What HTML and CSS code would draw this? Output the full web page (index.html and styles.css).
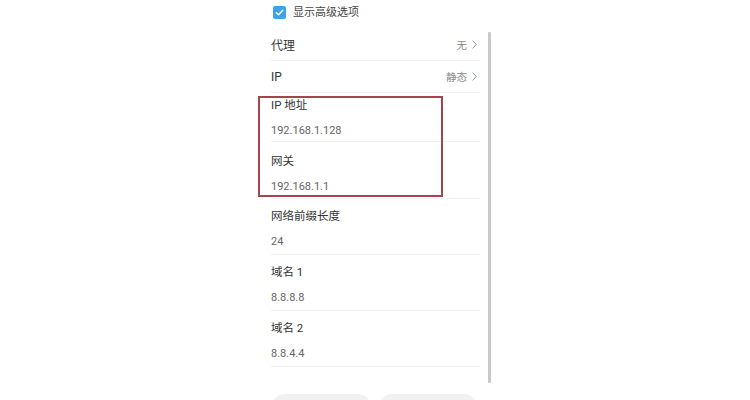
FILE: index.html
```html
<!DOCTYPE html>
<html lang="zh-CN">
<head>
<meta charset="utf-8">
<title>高级选项</title>
<link rel="stylesheet" href="styles.css">
</head>
<body>
<div class="screen">
  <div class="column">
    <div class="advanced">
      <span class="checkbox">
        <svg width="9" height="9" viewBox="0 0 10 10"><path d="M1.5 5.2 L4 7.5 L8.6 2.6" fill="none" stroke="#fff" stroke-width="1.6" stroke-linecap="round" stroke-linejoin="round"/></svg>
      </span>
      <span class="advanced-label">显示高级选项</span>
    </div>
    <div class="list">
      <div class="row row-first">
        <span class="row-title">代理</span>
        <span class="row-value">无<svg class="chev" width="5" height="9" viewBox="0 0 5 9"><path d="M0.6 0.6 L4.3 4.5 L0.6 8.4" fill="none" stroke="#8a8a8a" stroke-width="0.9"/></svg></span>
      </div>
      <div class="row">
        <span class="row-title">IP</span>
        <span class="row-value">静态<svg class="chev" width="5" height="9" viewBox="0 0 5 9"><path d="M0.6 0.6 L4.3 4.5 L0.6 8.4" fill="none" stroke="#8a8a8a" stroke-width="0.9"/></svg></span>
      </div>
      <div class="highlight">
        <div class="item item-tight">
          <div class="item-label">IP 地址</div>
          <div class="item-value">192.168.1.128</div>
        </div>
        <div class="item item-loose">
          <div class="item-label">网关</div>
          <div class="item-value">192.168.1.1</div>
        </div>
      </div>
      <div class="item">
        <div class="item-label">网络前缀长度</div>
        <div class="item-value">24</div>
      </div>
      <div class="item">
        <div class="item-label">域名 1</div>
        <div class="item-value">8.8.8.8</div>
      </div>
      <div class="item">
        <div class="item-label">域名 2</div>
        <div class="item-value">8.8.4.4</div>
      </div>
    </div>
    <div class="actions">
      <button class="btn">取消</button>
      <button class="btn btn-save">保存</button>
    </div>
  </div>
  <div class="scrollbar"></div>
</div>
</body>
</html>
```
FILE: styles.css
```css
html, body {
  margin: 0;
  padding: 0;
  background: #ffffff;
}
body {
  font-family: Roboto, "Noto Sans CJK SC", sans-serif;
  color: #333;
}
.screen {
  position: relative;
  width: 750px;
  height: 400px;
  overflow: hidden;
  display: flex;
  justify-content: center;
  align-items: flex-start;
}
.column {
  width: 209px;
  margin-left: 1px;
  display: flex;
  flex-direction: column;
  flex-shrink: 0;
}
.column > *,
.list > *,
.highlight > * {
  flex-shrink: 0;
}
.advanced {
  height: 28px;
  display: flex;
  align-items: flex-start;
  padding-top: 6px;
  box-sizing: border-box;
  padding-left: 2px;
}
.checkbox {
  width: 13px;
  height: 13px;
  border-radius: 2px;
  background: #3ea2ea;
  display: flex;
  align-items: center;
  justify-content: center;
}
.advanced-label {
  font-size: 11px;
  line-height: 14px;
  color: #444;
  margin-left: 7px;
}
.list {
  display: flex;
  flex-direction: column;
}
.row {
  height: 32px;
  box-sizing: border-box;
  border-bottom: 1px solid #f0f0f0;
  display: flex;
  align-items: center;
  justify-content: space-between;
}
.row-first {
  height: 33px;
  padding-top: 1px;
}
.row-title {
  font-size: 12px;
  color: #333;
}
.row-value {
  font-size: 10.5px;
  color: #8a8a8a;
  display: flex;
  align-items: center;
  padding-right: 3px;
}
.chev {
  margin-left: 5px;
}
.highlight {
  position: relative;
  display: flex;
  flex-direction: column;
}
.highlight::after {
  content: "";
  position: absolute;
  left: -13px;
  right: 37px;
  top: 3px;
  bottom: 2px;
  border: 2px solid #a5444d;
  pointer-events: none;
}
.item {
  height: 56px;
  box-sizing: border-box;
  border-bottom: 1px solid #f0f0f0;
  padding-top: 7px;
  display: flex;
  flex-direction: column;
  gap: 6px;
}
.item-tight {
  height: 49px;
  padding-top: 2px;
}
.item-loose {
  height: 57px;
  padding-top: 9px;
}
.item-label {
  font-size: 11.5px;
  line-height: 20px;
  color: #333;
}
.item-value {
  font-size: 11px;
  line-height: 20px;
  color: #666;
}
.actions {
  display: flex;
  gap: 8px;
  margin-top: 27px;
  margin-left: 1px;
  margin-right: 3px;
}
.btn {
  flex: 1;
  height: 34px;
  border: none;
  border-radius: 13px;
  background: #f2f2f2;
  font-family: Roboto, "Noto Sans CJK SC", sans-serif;
  font-size: 12px;
  color: #333;
}
.btn-save {
  color: #d9534f;
}
.scrollbar {
  position: absolute;
  left: 488px;
  top: 32px;
  width: 3px;
  height: 351px;
  background: #c9c9c9;
  border-radius: 1px;
}
```
